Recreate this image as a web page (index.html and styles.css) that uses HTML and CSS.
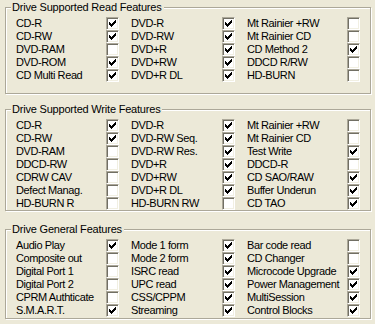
FILE: index.html
```html
<!DOCTYPE html>
<html>
<head>
    <meta name="viewport" content="width=device-width, initial-scale=1">
    <link rel="stylesheet" href="styles.css">
</head>
<body>

<svg class="defs" width="0" height="0">
    <symbol id="chk" viewBox="0 0 7 7">
        <path d="M0 2h1v3H0z M1 3h1v3H1z M2 4h1v3H2z M3 3h1v3H3z M4 2h1v3H4z M5 1h1v3H5z M6 0h1v3H6z"/>
    </symbol>
</svg>

<div class="group g1">
    <div class="title">Drive Supported Read Features</div>
    <div class="rows">
        <span>CD-R</span><span class="cb on"><svg><use href="#chk"/></svg></span>
        <span>DVD-R</span><span class="cb on"><svg><use href="#chk"/></svg></span>
        <span>Mt Rainier +RW</span><span class="cb"></span>

        <span>CD-RW</span><span class="cb on"><svg><use href="#chk"/></svg></span>
        <span>DVD-RW</span><span class="cb on"><svg><use href="#chk"/></svg></span>
        <span>Mt Rainier CD</span><span class="cb"></span>

        <span>DVD-RAM</span><span class="cb"></span>
        <span>DVD+R</span><span class="cb on"><svg><use href="#chk"/></svg></span>
        <span>CD Method 2</span><span class="cb on"><svg><use href="#chk"/></svg></span>

        <span>DVD-ROM</span><span class="cb on"><svg><use href="#chk"/></svg></span>
        <span>DVD+RW</span><span class="cb on"><svg><use href="#chk"/></svg></span>
        <span>DDCD R/RW</span><span class="cb"></span>

        <span>CD Multi Read</span><span class="cb on"><svg><use href="#chk"/></svg></span>
        <span>DVD+R DL</span><span class="cb on"><svg><use href="#chk"/></svg></span>
        <span>HD-BURN</span><span class="cb"></span>
    </div>
</div>

<div class="group g2">
    <div class="title">Drive Supported Write Features</div>
    <div class="rows">
        <span>CD-R</span><span class="cb on"><svg><use href="#chk"/></svg></span>
        <span>DVD-R</span><span class="cb on"><svg><use href="#chk"/></svg></span>
        <span>Mt Rainier +RW</span><span class="cb"></span>

        <span>CD-RW</span><span class="cb on"><svg><use href="#chk"/></svg></span>
        <span>DVD-RW Seq.</span><span class="cb on"><svg><use href="#chk"/></svg></span>
        <span>Mt Rainier CD</span><span class="cb"></span>

        <span>DVD-RAM</span><span class="cb"></span>
        <span>DVD-RW Res.</span><span class="cb on"><svg><use href="#chk"/></svg></span>
        <span>Test Write</span><span class="cb on"><svg><use href="#chk"/></svg></span>

        <span>DDCD-RW</span><span class="cb"></span>
        <span>DVD+R</span><span class="cb on"><svg><use href="#chk"/></svg></span>
        <span>DDCD-R</span><span class="cb"></span>

        <span>CDRW CAV</span><span class="cb"></span>
        <span>DVD+RW</span><span class="cb on"><svg><use href="#chk"/></svg></span>
        <span>CD SAO/RAW</span><span class="cb on"><svg><use href="#chk"/></svg></span>

        <span>Defect Manag.</span><span class="cb"></span>
        <span>DVD+R DL</span><span class="cb on"><svg><use href="#chk"/></svg></span>
        <span>Buffer Underun</span><span class="cb on"><svg><use href="#chk"/></svg></span>

        <span>HD-BURN R</span><span class="cb"></span>
        <span>HD-BURN RW</span><span class="cb"></span>
        <span>CD TAO</span><span class="cb on"><svg><use href="#chk"/></svg></span>
    </div>
</div>

<div class="group g3">
    <div class="title">Drive General Features</div>
    <div class="rows">
        <span>Audio Play</span><span class="cb on"><svg><use href="#chk"/></svg></span>
        <span>Mode 1 form</span><span class="cb on"><svg><use href="#chk"/></svg></span>
        <span>Bar code read</span><span class="cb"></span>

        <span>Composite out</span><span class="cb"></span>
        <span>Mode 2 form</span><span class="cb on"><svg><use href="#chk"/></svg></span>
        <span>CD Changer</span><span class="cb"></span>

        <span>Digital Port 1</span><span class="cb"></span>
        <span>ISRC read</span><span class="cb on"><svg><use href="#chk"/></svg></span>
        <span>Microcode Upgrade</span><span class="cb on"><svg><use href="#chk"/></svg></span>

        <span>Digital Port 2</span><span class="cb"></span>
        <span>UPC read</span><span class="cb on"><svg><use href="#chk"/></svg></span>
        <span>Power Management</span><span class="cb on"><svg><use href="#chk"/></svg></span>

        <span>CPRM Authticate</span><span class="cb"></span>
        <span>CSS/CPPM</span><span class="cb on"><svg><use href="#chk"/></svg></span>
        <span>MultiSession</span><span class="cb on"><svg><use href="#chk"/></svg></span>

        <span>S.M.A.R.T.</span><span class="cb on"><svg><use href="#chk"/></svg></span>
        <span>Streaming</span><span class="cb on"><svg><use href="#chk"/></svg></span>
        <span>Control Blocks</span><span class="cb on"><svg><use href="#chk"/></svg></span>
    </div>
</div>

</body>
</html>
```

FILE: styles.css
```css
html, body {
    margin: 0;
    background: #ece9d8;
}

body {
    width: 375px;
    height: 324px;
    overflow: hidden;
    padding-top: 7px;
    box-sizing: border-box;
    font-family: "Liberation Sans", Arial, sans-serif;
    font-size: 11px;
    letter-spacing: -0.4px;
    color: #000;
}

.defs {
    position: absolute;
}

/* etched group box, like the old windows frame */
.group {
    box-sizing: border-box;
    margin-left: 5px;
    width: 366px;
    border: 1px solid #aca899;
    box-shadow: inset 1px 1px 0 #fff, 1px 1px 0 #fff;
}

.g1 {
    height: 87px;
}

.g2 {
    margin-top: 15px;
    height: 102px;
}

.g3 {
    margin-top: 18px;
    height: 90px;
}

.title {
    width: max-content;
    margin: -7px 0 0 5px;
    padding: 0 2px 0 1px;
    line-height: 13px;
    letter-spacing: -0.2px;
    background: #ece9d8;
}

.rows {
    display: grid;
    grid-template-columns: 90px 25px 91px 25px 100px 13px;
    grid-auto-rows: 13px;
    margin: 3px 0 0 10px;
    line-height: 13px;
    white-space: nowrap;
}

.cb {
    box-sizing: border-box;
    width: 13px;
    height: 13px;
    background: #fff;
    border-top: 1px solid #aca899;
    border-left: 1px solid #aca899;
    border-bottom: 1px solid #fff;
    border-right: 1px solid #fff;
    box-shadow: inset 1px 1px 0 #716f64, inset -1px -1px 0 #f1efe2;
}

.cb svg {
    display: block;
    width: 7px;
    height: 7px;
    margin: 2px 0 0 2px;
    fill: #000;
    shape-rendering: crispEdges;
}
```
